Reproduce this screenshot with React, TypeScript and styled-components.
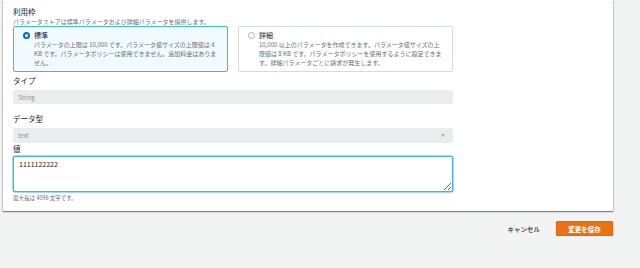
import React from 'react'
import styled, { createGlobalStyle } from 'styled-components'

const GlobalStyle = createGlobalStyle`
    html, body {
        margin: 0;
        padding: 0;
        background: #f2f3f3;
        font-family: "Noto Sans CJK JP", "Noto Sans", sans-serif;
    }
`

const Page = styled.div`
    width: 640px;
    height: 268px;
    overflow: hidden;
    display: flex;
    flex-direction: column;
`

const Panel = styled.div`
    width: 610px;
    height: 211px;
    margin-left: 3px;
    box-sizing: border-box;
    padding: 7px 0 0 10px;
    background: #ffffff;
    box-shadow: 0 1px 1px 0 rgba(0, 28, 36, 0.3), 1px 1px 1px 0 rgba(0, 28, 36, 0.15), -1px 1px 1px 0 rgba(0, 28, 36, 0.15);
`

const Content = styled.div`
    width: 440px;
    display: flex;
    flex-direction: column;
`

const Title = styled.div<{ $mt?: number }>`
    font-size: 7.5px;
    line-height: 10px;
    color: #16191f;
    margin-top: ${p => p.$mt ?? 0}px;
`

const Sub = styled.div`
    font-size: 6px;
    line-height: 9px;
    color: #687078;
`

const Cards = styled.div`
    display: grid;
    grid-template-columns: 215px 215px;
    column-gap: 10px;
`

const Card = styled.div<{ $on?: boolean }>`
    height: 46px;
    box-sizing: border-box;
    padding: 4px 8px 0 9px;
    border: 1px solid ${p => (p.$on ? '#44b9d6' : '#d5dbdb')};
    background: ${p => (p.$on ? '#f1faff' : '#ffffff')};
    border-radius: 2px;
    display: flex;
    gap: 4px;
`

const Radio = styled.span<{ $on?: boolean }>`
    flex: none;
    width: 7px;
    height: 7px;
    margin-top: 1px;
    box-sizing: border-box;
    border-radius: 50%;
    border: ${p => (p.$on ? '2px solid #0073bb' : '1px solid #aab7b8')};
    background: #ffffff;
`

const CardBody = styled.div`
    display: flex;
    flex-direction: column;
`

const CardTitle = styled.div`
    font-size: 7px;
    line-height: 9px;
    color: #16191f;
`

const CardText = styled.div`
    font-size: 6px;
    line-height: 9px;
    color: #687078;
`

const ReadOnlyBox = styled.div<{ $h: number }>`
    height: ${p => p.$h}px;
    margin-top: 4px;
    box-sizing: border-box;
    padding: 0 5px;
    background: #eaeded;
    border-radius: 2px;
    display: flex;
    align-items: center;
    justify-content: space-between;
    font-size: 6px;
    color: #879596;
`

const Caret = styled.span`
    width: 0;
    height: 0;
    border-left: 2.5px solid transparent;
    border-right: 2.5px solid transparent;
    border-top: 3px solid #aab7b8;
    margin-right: 3px;
`

const Value = styled.textarea`
    display: block;
    width: 440px;
    height: 36px;
    margin-top: 2px;
    box-sizing: border-box;
    padding: 3px 5px;
    border: 1px solid #44b9d6;
    box-shadow: 0 0 0 0.5px #44b9d6;
    border-radius: 2px;
    outline: none;
    font-family: "Noto Sans CJK JP", "Noto Sans", sans-serif;
    font-size: 7px;
    line-height: 9px;
    color: #16191f;
    background: #ffffff;
`

const Hint = styled.div`
    font-size: 5.5px;
    line-height: 9px;
    color: #687078;
    margin-top: 2px;
`

const Footer = styled.div`
    display: flex;
    justify-content: flex-end;
    align-items: center;
    gap: 16px;
    padding: 10px 27px 0 0;
`

const Cancel = styled.span`
    font-size: 6.5px;
    font-weight: 700;
    color: #545b64;
`

const Save = styled.span`
    width: 57px;
    height: 15px;
    display: flex;
    align-items: center;
    justify-content: center;
    background: #ec7211;
    border: 0.5px solid #eb5f07;
    box-sizing: border-box;
    border-radius: 1px;
    font-size: 6.5px;
    font-weight: 700;
    color: #ffffff;
`

const App: React.FC = () => {
    return (
        <Page>
            <GlobalStyle />
            <Panel>
                <Content>
                    <Title>利用枠</Title>
                    <Sub>パラメータストアは標準パラメータおよび詳細パラメータを提供します。</Sub>
                    <Cards>
                        <Card $on>
                            <Radio $on />
                            <CardBody>
                                <CardTitle>標準</CardTitle>
                                <CardText>パラメータの上限は 10,000 です。パラメータ値サイズの上限値は 4 KB です。パラメータポリシーは使用できません。追加料金はありません。</CardText>
                            </CardBody>
                        </Card>
                        <Card>
                            <Radio />
                            <CardBody>
                                <CardTitle>詳細</CardTitle>
                                <CardText>10,000 以上のパラメータを作成できます。パラメータ値サイズの上限値は 8 KB です。パラメータポリシーを使用するように設定できます。詳細パラメータごとに請求が発生します。</CardText>
                            </CardBody>
                        </Card>
                    </Cards>
                    <Title $mt={4}>タイプ</Title>
                    <ReadOnlyBox $h={14}>String</ReadOnlyBox>
                    <Title $mt={10}>データ型</Title>
                    <ReadOnlyBox $h={15}>text<Caret /></ReadOnlyBox>
                    <Title $mt={1}>値</Title>
                    <Value readOnly defaultValue="1111122222" />
                    <Hint>最大長は 4096 文字です。</Hint>
                </Content>
            </Panel>
            <Footer>
                <Cancel>キャンセル</Cancel>
                <Save>変更を保存</Save>
            </Footer>
        </Page>
    )
}

export default App
